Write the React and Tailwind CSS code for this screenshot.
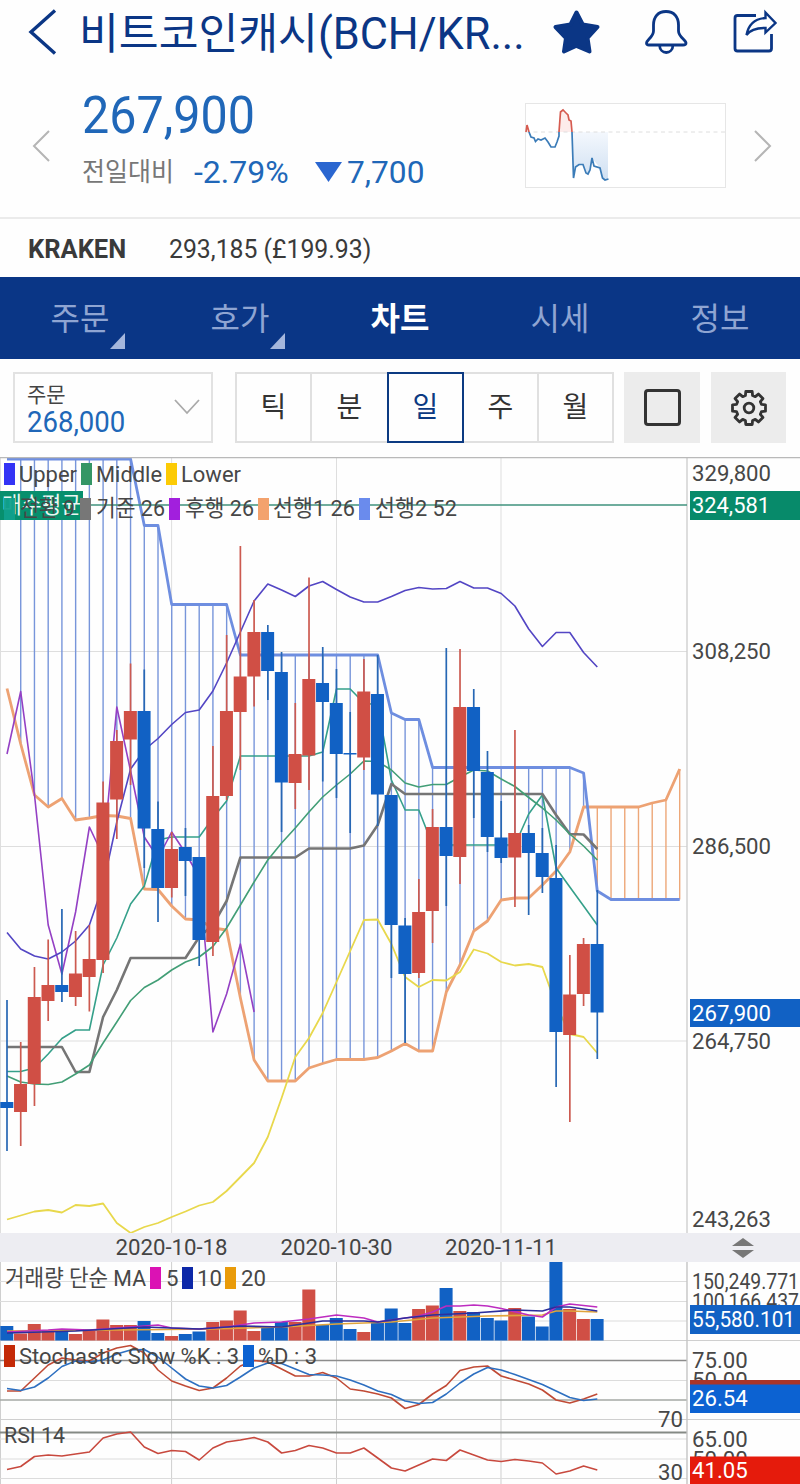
const STEP = 13.728;
const px = (i) => 7 + i * STEP;
const path = (pts) => pts.map(([i, y]) => `${px(i).toFixed(1)},${y}`).join(" ");
const seq = (ys) => ys.map((y, i) => [i, y]);
const rep = (v, n) => Array(n).fill(v);

const R = "#d04f45";
const B = "#1161c4";

// [color, high, bodyTop, bodyBottom, low]
const CANDLES = [
  [B, 1000, 1102, 1108, 1151], [R, 1042, 1084, 1112, 1146], [R, 967, 997, 1084, 1106], [R, 939.5, 985, 1001, 1021],
  [B, 909, 985, 992, 1002], [R, 931, 973.5, 997, 1006], [R, 925, 959, 977, 1011.5], [R, 781.5, 802.5, 960, 973],
  [R, 730, 741, 799.5, 839], [R, 663.5, 711, 739.5, 785], [B, 669.5, 711, 828.5, 868], [B, 801.5, 829, 888, 922],
  [R, 832, 849, 888, 897.5], [B, 828, 847, 861, 896], [B, 857, 857, 940, 966], [R, 746, 796, 942, 956],
  [R, 635, 711, 796, 800], [R, 546, 676.5, 712, 770], [R, 600, 632, 676.5, 706.5], [B, 625, 632, 671, 700],
  [B, 652, 672, 782.5, 832], [R, 703, 754, 783, 809], [R, 577.5, 679, 755.5, 790], [B, 647, 683, 702, 781.5],
  [B, 669, 703, 754, 798], [B, 712, 753, 754.5, 833], [R, 659, 691.5, 757.5, 770], [B, 655, 694, 794.5, 826],
  [B, 795, 795, 925, 978], [B, 918, 925.5, 974, 1043], [R, 879, 912, 973, 978], [R, 809, 827, 911, 943],
  [B, 648, 827, 856, 906], [R, 649, 707, 857, 884], [B, 689, 707, 771, 818], [B, 751, 772, 837, 852],
  [B, 801, 837.5, 858, 863], [R, 730, 833, 857.5, 907], [B, 825, 833, 853, 915], [B, 828, 853, 877, 893],
  [B, 845, 878, 1032, 1087], [R, 955, 994.5, 1035, 1122], [R, 938, 944, 994, 1006], [B, 890, 944, 1012.5, 1059],
];

const SPAN2 = [...rep(459, 10), 525.5, 525.5, ...rep(604.5, 5), ...rep(655, 11), 713, 719.5, 719.5, ...rep(767.5, 11), 773, 891, ...rep(899.5, 6)];
const SPAN1 = [688.5, 744, 795, 807, 798.5, 820, 818, 815.5, 816, 818.5, 889, 889.5, 906, 919, 920, 928, 930, 998, 1060, 1081, 1081, 1081, 1068, 1063.5, 1059.5, 1059.5, 1059.5, 1057.5, 1051, 1043.5, 1051, 1051, 992, 965, 931, 921, 900, 898, 898, 885, 871, 852, 807, 807, 807, 807, 807, 803, 800, 769];
const UPPER = [932.5, 949, 956, 959, 952, 941, 925, 885, 822, 769, 750, 738.5, 724.5, 712.5, 710, 691, 663, 632, 601, 584, 590, 596.5, 586, 581.5, 589.5, 597, 602, 602, 596.5, 590.5, 587.5, 589, 588.5, 581.5, 588, 588, 593.5, 606, 629, 646.5, 632.5, 632.5, 652.5, 667];
const MIDDLE = [1076, 1082, 1084, 1084.5, 1082, 1074, 1065, 1043, 1022, 1000.5, 987.5, 980, 970, 962, 957, 946.5, 928, 905, 882, 860, 843, 828, 812, 797, 785, 774, 761, 761.5, 770, 783, 787, 784.5, 784.5, 777, 770, 771, 779, 786.5, 797.5, 808, 820, 834, 846, 860];
const TURN = [1071.5, 1071.5, 1068, 1054, 1038.5, 1030, 1030, 965, 938, 904, 886, 840, 837, 837, 837, 818, 801, ...rep(756, 6), 752, 689, 689, 703, 705, 780, 810, 810, ...rep(845, 7), 814, 795, 868, 887, 906, 925];
const BASE = [...rep(1047, 5), 1072, 1072, 1017, 990, ...rep(958, 5), 937, 925, 901, ...rep(857.5, 5), ...rep(848.5, 4), 845.5, 825, 784, ...rep(794, 11), 815, 834, 834.5, 849];
const LAG = [754, 691.5, 795, 925, 974, 912, 827, 856, 707, 771, 837, 858, 832, 853, 877, 1032, 994, 944, 1012];
const LOWER = [1219.5, 1215.5, 1211.5, 1210, 1212.5, 1205, 1206, 1203.5, 1223, 1233, 1227, 1223, 1217, 1211.5, 1205.5, 1202, 1191, 1177, 1163, 1137, 1098, 1057, 1038, 1013, 982, 951, 920, 919.5, 944, 977, 987, 980, 980.5, 972, 949.5, 953.5, 962, 965.5, 964, 967, 1005, 1034, 1037, 1053];

const VOLUME = [1326, 1333.5, 1324, 1330.5, 1332, 1334, 1331, 1319.5, 1325, 1325, 1321, 1333, 1336, 1334, 1331.5, 1322, 1320.5, 1310.5, 1331, 1328, 1322, 1322, 1289.5, 1325, 1318, 1329, 1332, 1323, 1308.5, 1323, 1309, 1305.5, 1288, 1311, 1312, 1318, 1320.5, 1308, 1316.5, 1326.5, 1262, 1309, 1319, 1319];
const VMA5 = [[0, 1332], [3, 1330], [4, 1329], [6, 1330], [9, 1327], [11, 1325], [12, 1328], [14, 1329], [16, 1327], [18, 1323], [20, 1322], [22, 1319], [24, 1315], [26, 1318], [27, 1322], [28, 1320], [30, 1316], [31, 1312], [32, 1306], [33, 1306], [34, 1305], [35, 1306], [36, 1308.5], [38, 1315], [39, 1317], [40, 1307], [41, 1304], [43, 1307]];
const VMA10 = [[0, 1333], [5, 1331], [10, 1327], [14, 1329], [17, 1326], [20, 1327], [23, 1321], [26, 1321], [27, 1322], [29, 1318], [31, 1315], [34, 1313], [37, 1310], [39, 1311], [40, 1307], [41, 1307], [43, 1311]];
const VMA20 = [[0, 1331], [8, 1330], [15, 1329], [20, 1327], [24, 1324], [28, 1322], [31, 1318], [35, 1316], [39, 1315], [40, 1311], [41, 1311], [43, 1312]];
const STO_K = [1391, 1391, 1378, 1365, 1358, 1360, 1361, 1353, 1348, 1345.5, 1353, 1370, 1381, 1386, 1390.5, 1388, 1378, 1366, 1360.5, 1362, 1369, 1376, 1376, 1372.5, 1378, 1389, 1391, 1394, 1398, 1408.5, 1404.5, 1394, 1385.5, 1370.5, 1367, 1366, 1376, 1380, 1384, 1390, 1400, 1403, 1399, 1394];
const STO_D = [1388.5, 1390.5, 1387, 1378, 1366.5, 1361, 1362, 1360, 1354, 1350, 1349.5, 1357, 1368, 1379, 1386, 1388, 1385.5, 1377, 1368, 1363, 1363.5, 1369, 1374.5, 1375, 1376, 1380, 1385, 1391, 1394.5, 1401, 1403.5, 1402.5, 1394, 1383, 1374, 1367.5, 1370, 1374.5, 1379.5, 1384.5, 1391, 1397.5, 1400.5, 1399];
const RSI = [1469.5, 1466.5, 1456.5, 1455, 1456, 1454, 1452, 1438, 1434, 1432, 1447, 1453.5, 1450.5, 1451.5, 1460, 1448, 1442, 1440, 1437.5, 1442, 1453, 1450.5, 1445.5, 1448, 1453, 1453, 1448, 1458, 1468, 1471, 1465, 1459, 1460.5, 1450, 1455, 1460, 1461.5, 1459.5, 1461, 1463, 1474, 1471, 1466, 1470];

// Eight-toothed gear outline around the origin
const GEAR = Array.from({ length: 8 }, (_, k) =>
  [[-16, 13], [-11, 16.8], [11, 16.8], [16, 13]].map(([d, r]) => {
    const a = ((k * 45 + d) * Math.PI) / 180;
    return `${(r * Math.cos(a)).toFixed(2)},${(r * Math.sin(a)).toFixed(2)}`;
  }).join(" ")
).join(" ");

const Line = ({ ys, pts, color, w = 1.6 }) => (
  <polyline points={path(pts || seq(ys))} fill="none" stroke={color} strokeWidth={w} strokeLinejoin="round" />
);
const T = ({ x, y, w, color = "#474747", children }) => (
  <text x={x} y={y} fill={color} fontSize="22.2" textLength={w} lengthAdjust="spacingAndGlyphs">{children}</text>
);
const Key = ({ x, y, color }) => <rect x={x} y={y} width="11" height="22" fill={color} />;
const VGrid = ({ y1, y2, light = "#dedede" }) =>
  [0.5, 171.6, 336.5, 501].map((x) => <line key={x} x1={x} x2={x} y1={y1} y2={y2} stroke={light} strokeWidth="1" />);

function PriceChart() {
  return (
    <svg className="block" width="800" height="776" viewBox="0 457 800 776">
      <VGrid y1={457} y2={1233} />
      {[651.5, 846.5, 1041].map((y) => <line key={y} x1="0" x2="687" y1={y} y2={y} stroke="#dedede" />)}
      <line x1="687" x2="687" y1="457" y2="1233" stroke="#cfcfcf" strokeWidth="1.4" />
      {SPAN2.map((b, i) =>
        i > 0 ? <line key={i} x1={px(i)} x2={px(i)} y1={b} y2={SPAN1[i]} stroke={i > 42 ? "#eda778" : "#7795da"} strokeWidth="1.4" /> : null
      )}
      <Line ys={SPAN1} color="#eda273" w={2.8} />
      <Line ys={SPAN2} color="#6e8ee0" w={2.8} />
      <Line ys={TURN} color="#35a08a" />
      <Line ys={BASE} color="#757575" w={2.6} />
      <Line ys={LAG} color="#9440c4" />
      <Line ys={UPPER} color="#5346c4" />
      <Line ys={MIDDLE} color="#429e76" />
      <Line ys={LOWER} color="#e8d84c" w={1.8} />
      {CANDLES.map(([c, h, t, b, l], i) => (
        <g key={i}>
          <line x1={px(i)} x2={px(i)} y1={h} y2={l} stroke={c === R ? "#cc5a50" : "#2767b4"} strokeWidth="1.7" />
          <rect x={px(i) - 6.7} y={t} width="13" height={b - t} fill={c} />
        </g>
      ))}
      <line x1="0" x2="687" y1="505" y2="505" stroke="#3f927c" strokeWidth="1.7" />
      <line x1="0" x2="800" y1="457.5" y2="457.5" stroke="#b9b9b9" strokeWidth="1.6" />

      <Key x={4} y={463} color="#3333f5" /><T x={19} y={482} w={58}>Upper</T>
      <Key x={81} y={463} color="#349665" /><T x={96} y={482} w={66}>Middle</T>
      <Key x={166} y={463} color="#fccb05" /><T x={181} y={482} w={60}>Lower</T>

      <rect x="0" y="491" width="83" height="29" fill="#078f6d" />
      <T x={2} y={513} w={79} color="#e9f7f3">매수평균</T>
      <rect x="4" y="498" width="11" height="22" fill="#10a08c" fillOpacity="0.95" />
      <T x={20} y={516} w={55}>전환 9</T>
      <Key x={80} y={498} color="#777" /><T x={96} y={516} w={69}>기준 26</T>
      <Key x={169} y={498} color="#a21fdd" /><T x={185} y={516} w={69}>후행 26</T>
      <Key x={258} y={498} color="#f3a26d" /><T x={273} y={516} w={82}>선행1 26</T>
      <Key x={359} y={498} color="#6a8bed" /><T x={375} y={516} w={82}>선행2 52</T>

      <T x={692} y={481} w={79}>329,800</T>
      <rect x="690" y="491" width="110" height="29" fill="#078a6a" />
      <T x={692} y={513} w={78} color="#fff">324,581</T>
      <T x={692} y={659} w={79}>308,250</T>
      <T x={692} y={854} w={79}>286,500</T>
      <rect x="690" y="999" width="110" height="28" fill="#1161c4" />
      <T x={692} y={1021} w={79} color="#fff">267,900</T>
      <T x={692} y={1049} w={79}>264,750</T>
      <T x={692} y={1226.5} w={79}>243,263</T>
    </svg>
  );
}

function Indicators() {
  return (
    <svg className="block" width="800" height="222" viewBox="0 1262 800 222">
      <VGrid y1={1262} y2={1484} light="#cfcfcf" />
      {[1281.5, 1301.5, 1321, 1380.5, 1439, 1459, 1478.5].map((y) => <line key={y} x1="0" x2="687" y1={y} y2={y} stroke="#dcdcdc" />)}
      {[1340.5, 1419.5].map((y) => <line key={y} x1="0" x2="800" y1={y} y2={y} stroke="#cfcfcf" />)}
      <line x1="0" x2="687" y1="1360.5" y2="1360.5" stroke="#8c8c8c" strokeWidth="1.4" />
      <line x1="0" x2="687" y1="1400" y2="1400" stroke="#a5a9a5" strokeWidth="1.6" />
      <line x1="0" x2="687" y1="1432.5" y2="1432.5" stroke="#858a85" strokeWidth="2" />
      <line x1="687" x2="687" y1="1262" y2="1484" stroke="#c4c4c4" strokeWidth="1.4" />

      {VOLUME.map((y, i) => (
        <rect key={i} x={px(i) - 6.7} y={y} width="13" height={1340.5 - y} fill={CANDLES[i][0]} />
      ))}
      <Line pts={VMA20} color="#e0a43c" />
      <Line pts={VMA5} color="#bd2cc0" />
      <Line pts={VMA10} color="#2c2f9c" />
      <T x={5} y={1286} w={141}>거래량 단순 MA</T>
      <Key x={150} y={1267} color="#db12b4" /><T x={166} y={1286}>5</T>
      <Key x={182} y={1267} color="#0d28a8" /><T x={197} y={1286}>10</T>
      <Key x={225} y={1267} color="#e99b0a" /><T x={241} y={1286}>20</T>

      <Line ys={STO_K} color="#c04a35" />
      <Line ys={STO_D} color="#2d6fc0" />
      <Key x={4} y={1345} color="#c42a07" /><T x={19} y={1364} w={220}>Stochastic Slow %K : 3</T>
      <Key x={243} y={1345} color="#0c62d2" /><T x={258} y={1364} w={59}>%D : 3</T>

      <Line ys={RSI} color="#c8493e" />
      <T x={4} y={1443} w={61}>RSI 14</T>
      <T x={658} y={1427}>70</T>
      <T x={658} y={1480}>30</T>

      <T x={692} y={1289} w={107}>150,249.771</T>
      <T x={692} y={1309} w={107}>100,166.437</T>
      <rect x="690" y="1305" width="110" height="29" fill="#1161c4" />
      <T x={692} y={1327} w={103} color="#fff">55,580.101</T>
      <T x={692} y={1368}>75.00</T>
      <T x={692} y={1388}>50.00</T>
      <rect x="690" y="1380" width="110" height="5" fill="#a8352a" />
      <rect x="690" y="1384.5" width="110" height="28.5" fill="#0c62d2" />
      <T x={692} y={1406} color="#fff">26.54</T>
      <T x={692} y={1447}>65.00</T>
      <T x={692} y={1467}>50.00</T>
      <rect x="690" y="1456.5" width="110" height="28" fill="#e51b0c" />
      <T x={692} y={1478} color="#fff">41.05</T>
    </svg>
  );
}

const Tab = ({ label, active, corner }) => (
  <div className={`relative flex w-[160px] items-center justify-center pt-[2px] text-[32px] ${active ? "font-bold text-white" : "text-[#8fa5d2]"}`}>
    <span>{label}</span>
    {corner && (
      <svg className="absolute right-[35px] bottom-[10px]" width="15" height="16" viewBox="0 0 15 16"><path d="M15 0V16H0Z" fill="#a5b7dd" /></svg>
    )}
  </div>
);

const Period = ({ label, active, hideEdge }) => (
  <div className={`flex h-full items-center justify-center pt-[1px] text-[28px] ${active ? "w-[77px] border-2 border-[#0c3a82] text-[#0c3a82]" : `w-[75px] border-y-2 border-[#e0e0e0] text-[#333] ${hideEdge ? "" : "border-r-2"}`}`}>
    <span>{label}</span>
  </div>
);

export default function App() {
  return (
    <div className="flex h-[1484px] w-[800px] flex-col overflow-hidden bg-[#fefefe] font-['Roboto','Noto_Sans_CJK_KR',sans-serif] whitespace-nowrap">
      <header className="flex h-[72px] shrink-0 items-start text-[#0b3685]">
        <svg className="mt-[8px] ml-[26px] shrink-0" width="34" height="48" viewBox="0 0 34 48"><path d="M29 2.5 5 24 29 45.5" fill="none" stroke="currentColor" strokeWidth="3.4" /></svg>
        <h1 className="mt-[6px] ml-[19px] w-[473px] shrink-0 origin-left scale-x-[0.995] text-[43.500px] leading-[58px]">비트코인캐시(BCH/KR...</h1>
        <svg className="mt-[8px] shrink-0" width="50" height="48" viewBox="552 8 50 48"><path d="M576.5 12.5 582.7 24.5 597.5 27 587.5 38 589.5 51.5 576.5 45.8 564 51.5 566 38 555.5 27 570.5 24.500Z" fill="currentColor" stroke="currentColor" strokeWidth="4" strokeLinejoin="round" /></svg>
        <svg className="mt-[8px] ml-[40px] shrink-0" width="48" height="48" viewBox="642 8 48 48" fill="none" stroke="currentColor" strokeWidth="2.8"><path d="M666 11.500C658 11.500 653.500 17 653.500 25V31C653.500 37 646.500 40 646.500 43Q646.500 45 649 45H683Q686 45 686 43C686 40 678.500 37 678.500 31V25C678.500 17 674 11.500 666 11.500ZM659.500 45C660 55 672.500 55 673 45" /></svg>
        <svg className="mt-[8px] ml-[40px] shrink-0" width="50" height="48" viewBox="730 8 50 48" fill="none" stroke="currentColor" strokeWidth="2.8"><path d="M756 15.500H737.500Q735 15.500 735 18V48.500Q735 51 737.500 51H769Q771.500 51 771.500 48.500V34" /><path d="M765.500 12.500 775.500 23 765.500 32.500V28Q752 27.500 746.500 35Q749.500 19 765.500 18Z" strokeWidth="2.4" /></svg>
      </header>

      <section className="flex h-[147px] shrink-0 items-start border-b-2 border-[#ebebeb]">
        <svg className="mt-[57px] ml-[31px]" width="20" height="34" viewBox="0 0 20 34"><path d="M18 2 3 17 18 32" fill="none" stroke="#b5b5b5" strokeWidth="2" /></svg>
        <div className="ml-[31px] w-[443px] text-[#2067b8]">
          <div className="mt-[16px] origin-left scale-x-[0.95] text-[51px] leading-[56px]">267,900</div>
          <div className="mt-[9px] flex items-center text-[32px] leading-[38px]">
            <span className="w-[112px] origin-left scale-x-[0.96] text-[26px] text-[#777]">전일대비</span>
            <span className="w-[121px] origin-left">-2.79%</span>
            <svg width="32" height="20" viewBox="0 0 32 20"><path d="M0 0H27L13.500 20Z" fill="#2a66d0" /></svg>
            <span className="origin-left scale-x-[0.99]">7,700</span>
          </div>
        </div>
        <svg className="mt-[31px]" width="201" height="85" viewBox="525 103 201 85">
          <defs>
            <linearGradient id="dn" x1="0" y1="0" x2="0" y2="1"><stop offset="0" stopColor="#f4f8fd" /><stop offset="1" stopColor="#cfe0f2" /></linearGradient>
          </defs>
          <rect x="525.500" y="103.500" width="200" height="84" fill="#fff" stroke="#e6e6e6" />
          <path d="M572 132H608V180L603 179 600 168 592 158 588 175 582 164 575 168 573 178Z" fill="url(#dn)" />
          <path d="M559 132 561 111 566 114 571 121 572 132Z" fill="#fdeceb" />
          <path d="M526 132H725" stroke="#dedede" strokeDasharray="4 3.500" />
          <path d="M526 132 527 125 529 132M559 132 560.500 112 563 110 566 113 568 115 569 120 571 121 572 132" fill="none" stroke="#d65b50" strokeWidth="1.700" />
          <path d="M529 132 531 137 534 138 535.500 141.500 538 139 541 140 545 138 548 142 551 147 555 147 557 142 559 136 559 132M572 132 573.500 178 575.500 167 579 164.500 583 164.500 586 173 588 174 590 170 592 158 594 166 600 168 602.500 178 605 180 608.500 179" fill="none" stroke="#3b7cb8" strokeWidth="1.700" />
        </svg>
        <svg className="mt-[57px] ml-[27px]" width="20" height="34" viewBox="0 0 20 34"><path d="M2 2 17 17 2 32" fill="none" stroke="#b5b5b5" strokeWidth="2" /></svg>
      </section>

      <section className="flex h-[58px] shrink-0 items-center pt-[3px] pl-[28px] text-[26px] text-[#3a3a3a]">
        <span className="w-[141px] origin-left scale-x-[0.98] font-bold">KRAKEN</span>
        <span className="origin-left scale-x-[0.953]">293,185 (£199.93)</span>
      </section>

      <nav className="flex h-[82px] shrink-0 bg-[#0a3686]">
        <Tab label="주문" corner />
        <Tab label="호가" corner />
        <Tab label="차트" active />
        <Tab label="시세" />
        <Tab label="정보" />
      </nav>

      <div className="flex h-[98px] shrink-0 items-start pt-[13px] pl-[13px]">
        <div className="flex h-[71px] w-[200px] items-center justify-between border-2 border-[#e2e2e2] pt-[3px] pr-[10px] pl-[12px]">
          <div className="flex flex-col">
            <span className="origin-left text-[21px] leading-[26px] text-[#444]">주문</span>
            <span className="origin-left scale-x-95 text-[29px] leading-[29px] text-[#2067b8]">268,000</span>
          </div>
          <svg className="mb-[4px]" width="28" height="16" viewBox="0 0 28 16"><path d="M2 1 14 14 26 1" fill="none" stroke="#aaa" strokeWidth="1.800" /></svg>
        </div>
        <div className="ml-[22px] flex h-[71px] border-l-2 border-[#e0e0e0]">
          <Period label="틱" />
          <Period label="분" hideEdge />
          <Period label="일" active />
          <Period label="주" />
          <Period label="월" />
        </div>
        <div className="ml-[10px] flex h-[71px] w-[76px] items-center justify-center bg-[#ececec]">
          <div className="h-[37px] w-[37px] rounded-[4px] border-[3px] border-[#333]" />
        </div>
        <div className="ml-[11px] flex h-[71px] w-[75px] items-center justify-center bg-[#ececec]">
          <svg width="38" height="38" viewBox="-19 -19 38 38" fill="none" stroke="#333" strokeWidth="2.800" strokeLinejoin="round"><polygon points={GEAR} /><circle r="4.800" /></svg>
        </div>
      </div>

      <main className="flex shrink-0 flex-col">
        <PriceChart />
        <div className="flex h-[29px] items-center bg-[#ededf2] pl-[115.500px] text-[22.2px] text-[#444]">
          <span className="w-[165px]">2020-10-18</span>
          <span className="w-[164.500px]">2020-10-30</span>
          <span className="w-[287px]">2020-11-11</span>
          <svg width="22" height="20" viewBox="0 0 22 20"><path d="M11 0 22 8H0ZM0 12H22L11 20Z" fill="#777" /></svg>
        </div>
        <Indicators />
      </main>
    </div>
  );
}
